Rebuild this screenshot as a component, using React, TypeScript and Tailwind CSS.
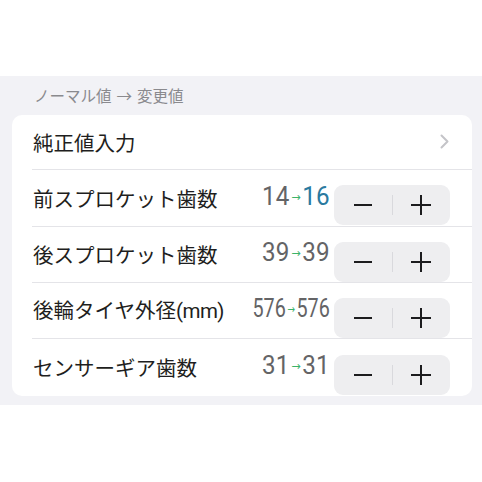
import React from 'react';

type Row = {
  label: string;
  unit?: string;
  from: number;
  to: number;
  changed: boolean;
  squeeze: boolean;
  height: string;
};

const rows: Row[] = [
  { label: '前スプロケット歯数', from: 14, to: 16, changed: true, squeeze: false, height: 'h-[57px]' },
  { label: '後スプロケット歯数', from: 39, to: 39, changed: false, squeeze: false, height: 'h-[56px]' },
  { label: '後輪タイヤ外径', unit: '(mm)', from: 576, to: 576, changed: false, squeeze: true, height: 'h-[56px]' },
  { label: 'センサーギア歯数', from: 31, to: 31, changed: false, squeeze: false, height: 'h-[57px]' },
];

const Stepper: React.FC = () => (
  <div className="mt-[14px] flex h-[40px] w-[116px] shrink-0 items-center rounded-[9px] bg-[#eeeef0]">
    <button className="flex h-full flex-1 items-center justify-center">
      <span className="block h-[2px] w-[18px] bg-[#1c1c1e]" />
    </button>
    <span className="block h-[20px] w-px bg-[#d9d9dd]" />
    <button className="flex h-full flex-1 items-center justify-center">
      <svg width="20" height="20" viewBox="0 0 20 20">
        <path d="M10 0v20M0 10h20" stroke="#1c1c1e" strokeWidth="2" />
      </svg>
    </button>
  </div>
);

const App: React.FC = () => {
  return (
    <div className="h-[482px] w-[482px] bg-white font-['Noto_Sans_CJK_JP',sans-serif]">
      <div className="h-[76px]" />
      <div className="bg-[#f2f2f6] pb-[9px] pl-3 pr-[10px] pt-[9px]">
        <p className="mb-[10px] ml-[22px] h-[20px] text-[15.5px] leading-[20px] text-[#8a8a8e]">
          ノーマル値<span className="mx-[5px]">→</span>変更値
        </p>

        <div className="overflow-hidden rounded-[10px] bg-white">
          {/* 純正値入力 */}
          <div className="pl-5">
            <div className="flex h-[55px] items-center justify-between border-b border-[#e4e4e8] pr-[23px]">
              <span className="ml-px text-[20.5px] text-[#1e1e20]">純正値入力</span>
              <svg width="9" height="15" viewBox="0 0 9 15" className="mt-[-2px]">
                <path d="M1.5 1.5l6 6-6 6" fill="none" stroke="#c4c4c8" strokeWidth="2" strokeLinecap="round" strokeLinejoin="round" />
              </svg>
            </div>
          </div>

          {rows.map((row, i) => (
            <div key={row.label} className="pl-5">
              <div
                className={`flex items-center pr-[22px] ${row.height} ${
                  i < rows.length - 1 ? 'border-b border-[#e4e4e8]' : ''
                }`}
              >
                <span className="ml-px min-w-0 flex-1 whitespace-nowrap text-[20.5px] text-[#1e1e20]">
                  {row.label}
                  {row.unit && <span className="font-['Roboto',sans-serif] tracking-[-0.5px]">{row.unit}</span>}
                </span>
                <div className="mb-[5px] mr-[4px] flex w-[80px] shrink-0 justify-end">
                  <span
                    className={`inline-block origin-right whitespace-nowrap font-['Roboto',sans-serif] text-[26px] leading-none text-[#646466] ${
                      row.squeeze ? 'scale-x-[0.76]' : 'scale-x-[0.93]'
                    }`}
                  >
                    {row.from}
                    <span className="mx-[2px] align-[4px] font-['DejaVu_Sans',sans-serif] text-[12px] text-[#3bb36a]">→</span>
                    <span className={row.changed ? 'text-[#2a7aa0]' : ''}>{row.to}</span>
                  </span>
                </div>
                <Stepper />
              </div>
            </div>
          ))}
        </div>
      </div>
    </div>
  );
};

export default App;
